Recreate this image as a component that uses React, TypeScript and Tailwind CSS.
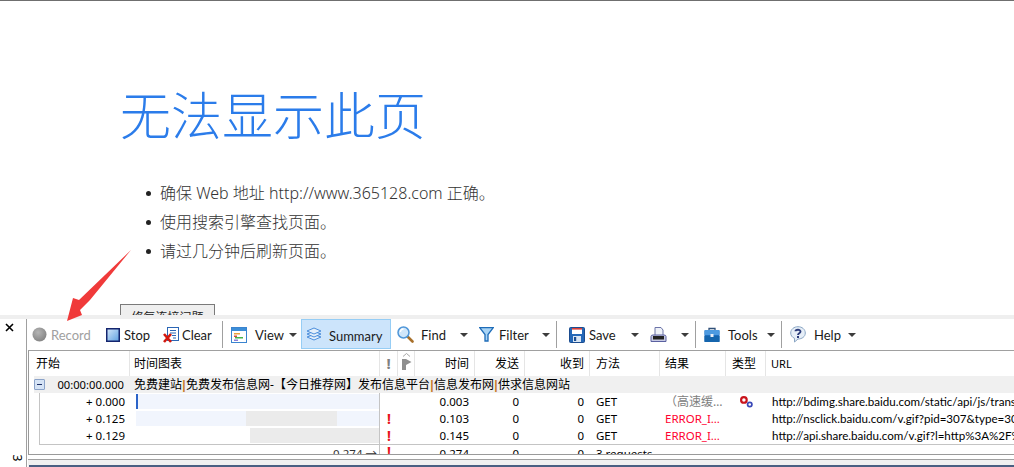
import React from "react";

const ui = "font-['Noto_Sans','Noto_Sans_CJK_SC',sans-serif]";
const cols = "grid grid-cols-[101px_250px_18px_17px_60px_50px_65px_70px_66px_40px_1fr]";

const Caret = ({ ml }: { ml: string }) => (
  <svg width="8" height="4" viewBox="0 0 8 4" className={`shrink-0 ${ml}`}>
    <path d="M0 0H8L4 4Z" fill="#3c3c3c" />
  </svg>
);

const Sep = ({ ml }: { ml: string }) => <div className={`w-[1px] h-[27px] shrink-0 bg-[#a0a0a0] ${ml}`} />;

const RecordIcon = () => (
  <svg width="15" height="15" viewBox="0 0 15 15" className="shrink-0">
    <defs>
      <radialGradient id="rec" cx="0.4" cy="0.35" r="0.8">
        <stop offset="0" stopColor="#b5b5b5" />
        <stop offset="1" stopColor="#7b7b7b" />
      </radialGradient>
    </defs>
    <circle cx="7.5" cy="7.5" r="7" fill="url(#rec)" />
  </svg>
);
const StopIcon = () => (
  <svg width="14" height="14" viewBox="0 0 14 14">
    <defs>
      <linearGradient id="st" x1="0" y1="0" x2="1" y2="1">
        <stop offset="0" stopColor="#d5e8fb" />
        <stop offset="1" stopColor="#5d9fe0" />
      </linearGradient>
    </defs>
    <rect x="0.75" y="0.75" width="12.5" height="12.5" fill="url(#st)" stroke="#14256e" strokeWidth="1.5" />
  </svg>
);
const ClearIcon = () => (
  <svg width="17" height="16" viewBox="0 0 17 16">
    <rect x="4.5" y="0.5" width="11" height="13" fill="#fff" stroke="#2b66b5" />
    <path d="M7 3.5h6M7 6h6M9 8.5h4M10 11h3" stroke="#2b66b5" />
    <path d="M1 7l7 8M8 7l-7 8" stroke="#d3180e" strokeWidth="2.6" />
  </svg>
);
const ViewIcon = () => (
  <svg width="16" height="16" viewBox="0 0 16 16">
    <rect x="0.5" y="0.5" width="15" height="15" fill="#fff" stroke="#3a84cf" />
    <rect x="1" y="1" width="14" height="3" fill="#3c8ed8" />
    <rect x="3" y="6" width="6" height="1.5" fill="#e9a23b" />
    <rect x="3" y="8.5" width="3" height="1.5" fill="#d94b3d" />
    <rect x="4" y="10" width="8" height="1.5" fill="#45b54a" />
    <rect x="3" y="12.5" width="4" height="1.5" fill="#8a7fd6" />
  </svg>
);
const SummaryIcon = () => (
  <svg width="16" height="14" viewBox="0 0 16 14" fill="#e3effb" stroke="#4d8fdc" strokeWidth="1" className="shrink-0">
    <path d="M8 7.5L15 10L8 13L1 10Z" />
    <path d="M8 4.5L15 7L8 10L1 7Z" />
    <path d="M8 1L15 4L8 7L1 4Z" />
  </svg>
);
const FindIcon = () => (
  <svg width="17" height="17" viewBox="0 0 17 17">
    <path d="M10.5 10.5L15.5 15.5" stroke="#a8702a" strokeWidth="2.6" strokeLinecap="round" />
    <circle cx="6.5" cy="6.5" r="5.5" fill="#cfe6fa" stroke="#4f96d8" strokeWidth="1.5" />
    <path d="M3.5 6a3 3 0 0 1 3-3" stroke="#fff" strokeWidth="1.3" fill="none" />
  </svg>
);
const FilterIcon = () => (
  <svg width="15" height="15" viewBox="0 0 15 15">
    <path d="M0.7 0.7H14.3L9 7.5V14H6V7.5Z" fill="#a9d4f5" stroke="#1e6cb8" strokeWidth="1.3" />
  </svg>
);
const SaveIcon = () => (
  <svg width="16" height="16" viewBox="0 0 16 16">
    <rect x="0.5" y="0.5" width="15" height="15" rx="1" fill="#2468b8" stroke="#1b4c8f" />
    <rect x="3" y="1" width="10" height="6" fill="#fff" />
    <rect x="3" y="1" width="10" height="1.6" fill="#d9403a" />
    <rect x="4" y="9" width="8" height="6" fill="#d9e6f4" />
    <rect x="5" y="10" width="2.2" height="4" fill="#1b4c8f" />
  </svg>
);
const PrintIcon = () => (
  <svg width="17" height="16" viewBox="0 0 17 16">
    <path d="M5 0.5H11L13 3V9H5Z" fill="#eef1f8" stroke="#6c74a8" />
    <path d="M1 9.5Q1 8 3 8H14Q16 8 16 9.5V14.5H1Z" fill="#c8cbe4" stroke="#5a60a0" />
    <rect x="3" y="9" width="11" height="3.5" fill="#222" />
  </svg>
);
const ToolsIcon = () => (
  <svg width="16" height="16" viewBox="0 0 16 16">
    <path d="M5 3V1.5H11V3" fill="none" stroke="#2f4f78" strokeWidth="1.3" />
    <rect x="0.5" y="3" width="15" height="12" rx="1" fill="#1f6fc0" />
    <rect x="0.5" y="3" width="15" height="5" rx="1" fill="#4d9ae0" />
    <rect x="0.5" y="9" width="15" height="6" fill="#1565ad" />
    <rect x="6.5" y="7" width="3" height="3" fill="#e9eef5" />
  </svg>
);
const HelpIcon = () => (
  <svg width="16" height="17" viewBox="0 0 16 17">
    <path d="M8 0.7C12 0.7 15.3 3.3 15.3 7C15.3 10.7 12 13 8 13L4.5 16V12.3C2 11.3 0.7 9.3 0.7 7C0.7 3.3 4 0.7 8 0.7Z" fill="#e6eef7" stroke="#8aa6c4" />
    <path d="M5.5 5.3C5.5 3.5 10.5 3 10.5 5.6C10.5 7.3 8 7.3 8 9" fill="none" stroke="#2d3d7c" strokeWidth="1.9" />
    <rect x="7" y="10" width="2" height="2" fill="#2d3d7c" />
  </svg>
);
const TypeIcon = () => (
  <svg width="13" height="12" viewBox="0 0 12 11">
    <circle cx="3.6" cy="3.6" r="2.6" fill="#fff" stroke="#c9141c" strokeWidth="2" />
    <circle cx="9" cy="7.8" r="2" fill="#fff" stroke="#3a49b8" strokeWidth="1.6" />
  </svg>
);
const FlagIcon = () => (
  <svg width="11" height="19" viewBox="0 0 11 19" className="-mt-[5px]">
    <path d="M2 4.5L5.5 1.5L9 4.5" fill="none" stroke="#a8a8a8" />
    <path d="M1 7H5L10.5 10L5 13V18H1Z" fill="#8f8f8f" />
  </svg>
);

const Label = ({ w, ml, children, className = "" }: { w: string; ml: string; children: React.ReactNode; className?: string }) => (
  <span className={`shrink-0 whitespace-nowrap pt-[2px] ${w} ${ml} ${className}`}>{children}</span>
);

const Head = ({ children, className = "" }: { children?: React.ReactNode; className?: string }) => (
  <div className={`h-[25px] flex items-center border-r border-[#e5e5e5] ${className}`}>{children}</div>
);

const Bang = () => <span className="text-[#e8141c] font-bold text-[14px] leading-none">!</span>;

type RowProps = { start: string; chart: React.ReactNode; bang?: boolean; time: string; result: React.ReactNode; type?: React.ReactNode; url: string };
const Row = ({ start, chart, bang, time, result, type, url }: RowProps) => (
  <div className={`${cols} h-[17px] items-center text-black`}>
    <div className="h-[17px] flex items-center justify-end pr-[5px]">{start}</div>
    <div className="h-[17px] border-r border-[#c4c4c4] pl-[6px] flex items-center">{chart}</div>
    <div className="flex justify-center">{bang && <Bang />}</div>
    <div />
    <div className="text-right pr-[6px]">{time}</div>
    <div className="text-right pr-[6px]">0</div>
    <div className="text-right pr-[6px]">0</div>
    <div className="pl-[6px]">GET</div>
    <div className="pl-[5px] whitespace-nowrap overflow-hidden">{result}</div>
    <div className="flex justify-center pl-[1px]">{type}</div>
    <div className="pl-[6px] whitespace-nowrap overflow-hidden text-[11.6px] font-['Lato','Noto_Sans',sans-serif]">{url}</div>
  </div>
);

const Pipe = () => <span className="inline-block w-[4px] text-center text-[#c77a2a] font-bold font-['Liberation_Sans',sans-serif]">|</span>;

export default function App() {
  return (
    <div className={`relative w-[1014px] h-[467px] overflow-hidden bg-white flex flex-col ${ui}`}>
      <main className="h-[315px] shrink-0 overflow-hidden border-t border-[#6f6f6f] pl-[120px] pt-[79px]">
        <h1 className="text-[51px] leading-[66px] font-light text-[#2b7cea] font-['Noto_Sans_CJK_SC',sans-serif]">无法显示此页</h1>
        <ul className="mt-[33px] text-[16px] leading-[29px] text-[#333] font-light font-['Noto_Sans','Noto_Sans_CJK_SC',sans-serif]">
          <li className="flex items-center"><span className="w-[5px] h-[5px] rounded-full bg-[#222] ml-[26px] mr-[9px]" />确保 Web 地址 http://www.365128.com 正确。</li>
          <li className="flex items-center"><span className="w-[5px] h-[5px] rounded-full bg-[#222] ml-[26px] mr-[9px]" />使用搜索引擎查找页面。</li>
          <li className="flex items-center"><span className="w-[5px] h-[5px] rounded-full bg-[#222] ml-[26px] mr-[9px]" />请过几分钟后刷新页面。</li>
        </ul>
        <button className="mt-[38px] w-[95px] h-[28px] border border-[#7a7a7a] bg-[#efefef] text-[12px] text-[#222]">修复连接问题</button>
      </main>
      <div className="h-[4px] shrink-0 bg-[#efefef]" />
      <div className="flex flex-1 min-h-0">
        <aside className="w-[26px] flex flex-col items-center text-black">
          <svg width="9" height="9" viewBox="0 0 9 9" className="mt-[4px] -ml-[8px]">
            <path d="M1 1L8 8M8 1L1 8" stroke="#000" strokeWidth="1.6" />
          </svg>
          <span className="mt-[120px] ml-[8px] text-[12px] leading-none rotate-90">3</span>
        </aside>
        <div className="w-[1px] bg-[#a0a0a0]" />
        <div className="flex-1 min-w-0 flex flex-col">
          <div className="h-[32px] shrink-0 flex items-center text-[13px] text-[#1a1a1a] pl-[4px] border-b border-[#a0a0a0] ml-[1px] font-['Lato','Noto_Sans',sans-serif]">
            <RecordIcon />
            <Label w="w-[41px]" ml="ml-[4px]" className="text-[#a0a0a0]">Record</Label>
            <div className="ml-[14px]"><StopIcon /></div>
            <Label w="w-[27px]" ml="ml-[4px]">Stop</Label>
            <div className="ml-[12px]"><ClearIcon /></div>
            <Label w="w-[30px]" ml="ml-[2px]">Clear</Label>
            <Sep ml="ml-[10px]" />
            <div className="ml-[8px]"><ViewIcon /></div>
            <Label w="w-[27px]" ml="ml-[8px]">View</Label>
            <Caret ml="ml-[7px]" />
            <div className="ml-[4px] w-[90px] h-[30px] self-start shrink-0 bg-[#cce4fb] border border-[#96cdf5] flex items-center pl-[4px]">
              <SummaryIcon />
              <Label w="w-[54px]" ml="ml-[7px]" className="mt-[4px]">Summary</Label>
            </div>
            <div className="ml-[6px]"><FindIcon /></div>
            <Label w="w-[24px]" ml="ml-[7px]">Find</Label>
            <Caret ml="ml-[15px]" />
            <div className="ml-[11px]"><FilterIcon /></div>
            <Label w="w-[28px]" ml="ml-[5px]">Filter</Label>
            <Caret ml="ml-[15px]" />
            <Sep ml="ml-[6px]" />
            <div className="ml-[12px]"><SaveIcon /></div>
            <Label w="w-[27px]" ml="ml-[4px]">Save</Label>
            <Caret ml="ml-[15px]" />
            <div className="ml-[11px]"><PrintIcon /></div>
            <Caret ml="ml-[14px]" />
            <Sep ml="ml-[6px]" />
            <div className="ml-[8px]"><ToolsIcon /></div>
            <Label w="w-[32px]" ml="ml-[8px]">Tools</Label>
            <Caret ml="ml-[7px]" />
            <Sep ml="ml-[6px]" />
            <div className="ml-[8px]"><HelpIcon /></div>
            <Label w="w-[26px]" ml="ml-[8px]">Help</Label>
            <Caret ml="ml-[8px]" />
          </div>
          <div className="h-[104px] shrink-0 overflow-hidden ml-[1px] border-l border-b border-[#9a9a9a] text-[11.5px] leading-[17px]">
            <div className={`${cols} h-[25px] text-[12px] text-black`}>
              <Head className="pl-[7px]">开始</Head>
              <Head className="pl-[4px]">时间图表</Head>
              <Head className="justify-center"><span className="font-bold text-[#808080] text-[15px]">!</span></Head>
              <Head className="justify-center"><FlagIcon /></Head>
              <Head className="justify-end pr-[5px]">时间</Head>
              <Head className="justify-end pr-[5px]">发送</Head>
              <Head className="justify-end pr-[5px]">收到</Head>
              <Head className="pl-[6px]">方法</Head>
              <Head className="pl-[5px]">结果</Head>
              <Head className="pl-[6px]">类型</Head>
              <div className="h-[25px] flex items-center pl-[5px] text-[11px]">URL</div>
            </div>
            <div className="flex h-[17px]">
              <div className="w-[5px]" />
              <div className="flex-1 bg-[#f0f0f0] flex items-center whitespace-nowrap text-black">
                <span className="w-[11px] h-[11px] border border-[#8ba3c9] bg-[#d5e3f5] flex items-center justify-center rounded-[1px]">
                  <span className="w-[5px] h-[1px] bg-[#1d2f66]" />
                </span>
                <span className="w-[79px] text-right mr-[6px] text-[11.2px]">00:00:00.000</span>
                <span className="ml-[4px] text-[12px]">免费建站<Pipe />免费发布信息网-【今日推荐网】发布信息平台<Pipe />信息发布网<Pipe />供求信息网站</span>
              </div>
            </div>
            <div className="ml-[10px] border-l border-b border-[#c4c4c4]">
              <div className="-ml-[11px]">
                <Row
                  start="+ 0.000"
                  time="0.003"
                  chart={<div className="w-[243px] h-[15px] bg-[#f1f5fd] border-l-2 border-[#2b63c8]" />}
                  result={<span className="text-[#808080] text-[12px]">（高速缓…</span>}
                  type={<TypeIcon />}
                  url="http://bdimg.share.baidu.com/static/api/js/trans/logger.js"
                />
                <Row
                  start="+ 0.125"
                  time="0.103"
                  bang
                  chart={<div className="w-[243px] h-[15px] bg-[#f1f5fd] pl-[110px]"><div className="w-[91px] h-[15px] bg-[#ebebeb]" /></div>}
                  result={<span className="text-[#ff0030]">ERROR_I…</span>}
                  url="http://nsclick.baidu.com/v.gif?pid=307&type=3071&sign=abc"
                />
                <Row
                  start="+ 0.129"
                  time="0.145"
                  bang
                  chart={<div className="w-[243px] h-[15px] pl-[114px]"><div className="w-[129px] h-[15px] bg-[#ebebeb]" /></div>}
                  result={<span className="text-[#ff0030]">ERROR_I…</span>}
                  url="http://api.share.baidu.com/v.gif?l=http%3A%2F%2Fwww.365128.com"
                />
              </div>
            </div>
            <div className={`${cols} h-[17px] text-black`}>
              <div />
              <div className="border-r border-[#c4c4c4] text-right pr-[2px] text-[#333]">0.274 →</div>
              <div className="flex justify-center"><Bang /></div>
              <div />
              <div className="text-right pr-[6px]">0.274</div>
              <div className="text-right pr-[6px]">0</div>
              <div className="text-right pr-[6px]">0</div>
              <div className="pl-[6px]">3 requests</div>
            </div>
          </div>
          <div className="h-[4px] shrink-0" />
          <div className="flex-1 ml-[1px] border-t border-[#a0a0a0] bg-[#f0f0f0] flex flex-col justify-end">
            <div className="h-[2px] bg-[#4a5f82] ml-[1px]" />
          </div>
        </div>
      </div>
      <svg width="70" height="75" viewBox="0 0 70 75" className="absolute left-[65px] top-[249px]">
        <path d="M66 1L25 51L15 61L17 66L2 72L8 49L14 51Z" fill="#f03a3a" />
      </svg>
    </div>
  );
}
